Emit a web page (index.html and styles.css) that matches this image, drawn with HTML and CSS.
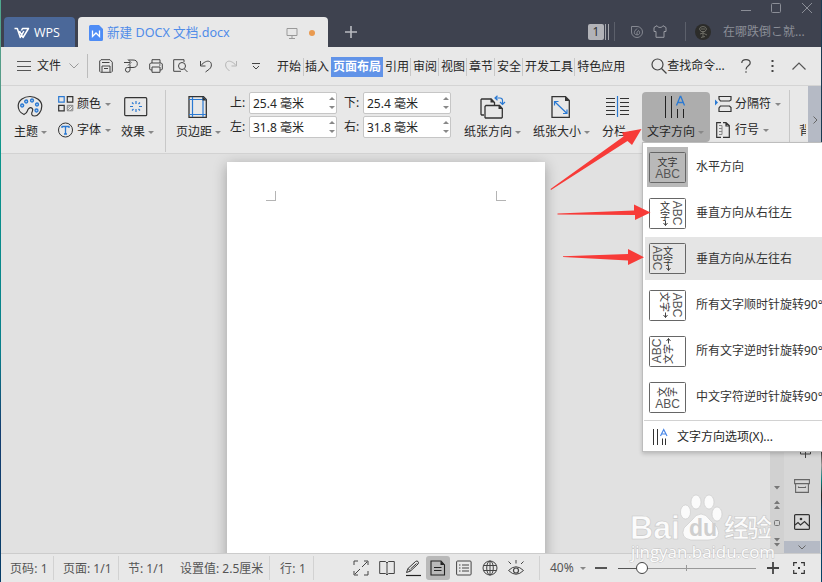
FILE: index.html
```html
<!DOCTYPE html>
<html lang="zh-CN">
<head>
<meta charset="utf-8">
<title>新建 DOCX 文档.docx</title>
<link rel="stylesheet" href="styles.css">
</head>
<body>
<div class="app">
  <header class="titlebar">
    <div class="tab-wps">
      <svg width="17" height="12" viewBox="0 0 17 12"><path d="M.5 1.500h2.800l3 9 3.500-6.500M5.500 4l3.500 6.500 5.500-9H8.500l-1 2" stroke="#fff" stroke-width="1.500" stroke-linejoin="round"/></svg>
      <span>WPS</span>
    </div>
    <div class="tab-doc">
      <svg width="14" height="16" viewBox="0 0 14 16"><path d="M1.500 0H10l4 4v10.500a1.500 1.500 0 0 1-1.500 1.500h-11A1.500 1.500 0 0 1 0 14.500v-13A1.500 1.500 0 0 1 1.500 0Z" fill="#4e8cf5"/><path d="M3.500 5.500v6L7 8l3.500 3.500v-6" stroke="#fff" stroke-width="1.300"/></svg>
      <span class="doc-name">新建 DOCX 文档.docx</span>
      <svg class="monitor" width="12" height="12" viewBox="0 0 12 12"><path d="M1 1.500h10v7H1zM6 8.500v3M3 11.500h6" stroke="#999"/></svg>
      <i class="dot"></i>
    </div>
    <svg class="plus" width="12" height="12" viewBox="0 0 12 12"><path d="M6 0v12M0 6h12" stroke="#b9bbc1" stroke-width="1.600"/></svg>
    <div class="title-right">
      <div class="window-buttons">
        <svg class="minimize" width="10" height="11" viewBox="0 0 10 11"><path d="M0 7.500h10" stroke="#8b8e97"/></svg>
        <svg width="10" height="11" viewBox="0 0 10 11"><rect x=".5" y=".5" width="9" height="9" rx="1" stroke="#8b8e97"/></svg>
        <svg width="10" height="11" viewBox="0 0 10 11"><path d="m0 0 10 10M10 0 0 10" stroke="#8b8e97"/></svg>
      </div>
      <div class="account">
        <span class="badge">1</span><span class="bars"></span><i class="tsep"></i>
        <svg class="flame" width="12" height="12" viewBox="0 0 12 12"><path d="M.5.500H6A5.500 5.500 0 1 1 .500 6Z" stroke="#858891"/><path d="M6 2.500C3.500 5 3 6 3.500 7.500s4.500 2 5 0S8 5 7.500 4.500L6 6.500V9" stroke="#858891"/></svg>
        <svg class="shirt" width="14" height="13" viewBox="0 0 14 13"><path d="M4 .7 1 2.500v4h2v5.800h8V6.500h2v-4L10 .7C9 3 5 3 4 .7Z" stroke="#999ba3" stroke-linejoin="round"/></svg>
        <i class="tsep second"></i>
        <svg class="avatar" width="16" height="16" viewBox="0 0 16 16"><circle cx="8" cy="8" r="8" fill="#2c2c2a"/><path d="M4.500 5Q5 2.500 8 2.500T11.500 5L10 7.500H6ZM6 5h4M8 8v5M5 10l3-1 4 2M6 13.500l4-1" stroke="#74746c" stroke-width=".9"/></svg>
        <span>在哪跌倒こ就...</span>
      </div>
    </div>
  </header>

  <nav class="menubar">
    <svg width="15" height="13" viewBox="0 0 15 13"><path d="M0 1.500h14M0 6.500h14M0 10.500h14" stroke="#555"/></svg>
    <span class="file">文件</span>
    <svg width="10" height="6" viewBox="0 0 10 6"><path d="m.5.500 4.500 4.500L9.500.500" stroke="#999"/></svg>
    <i class="msep"></i>
    <div class="quick">
      <svg width="14" height="14" viewBox="0 0 14 14"><path d="M2 .7h9l2.300 2.500v9.100l-1 1H1.700l-1-1V2ZM3 3.500h7.500M3 13V7h8v6M5 9.500h4" stroke="#444"/></svg>
      <svg width="14" height="14" viewBox="0 0 14 14"><path d="M0 3.500h6M4 .5 7 3.500l-3 3M4.500 1H9q4.300 0 4.300 3.700T9 8.500H3.500A2.300 2.300 0 1 0 6 11V5.500" stroke="#444"/></svg>
      <svg width="14" height="14" viewBox="0 0 14 14"><path d="M3 4V.7h8V4M3 11H1.500L.7 10V5l1-1h10.600l1 1v5l-.8 1H11M3 8h8v5.300H3ZM10 6h1.500" stroke="#444"/></svg>
      <svg width="15" height="14" viewBox="0 0 15 14"><path d="M11 3V.7H.7v11.600H8M11.500 10l3 3" stroke="#444"/><circle cx="9" cy="7" r="3.500" stroke="#444"/></svg>
      <svg width="14" height="14" viewBox="0 0 14 14"><path d="M1.500 2v5h5M1.800 6.500C5 3 8 1.500 10.500 2.500S13 8 10.500 10L6.500 13" stroke="#444"/></svg>
      <svg width="14" height="14" viewBox="0 0 14 14"><path d="M12.500 2v5h-5M12.200 6.500C9 3 6 1.500 3.500 2.500S1 8 3.500 10L5.500 12" stroke="#b5b5b5"/></svg>
      <svg width="8" height="8" viewBox="0 0 8 8"><path d="M0 1.500h8M1 4l3 3 3-3" stroke="#444"/></svg>
    </div>
    <div class="tabs"><span>开始</span><span>插入</span><b>页面布局</b><span>引用</span><span>审阅</span><span>视图</span><span>章节</span><span>安全</span><span>开发工具</span><span>特色应用</span></div>
    <svg width="16" height="16" viewBox="0 0 16 16"><circle cx="6.500" cy="6.500" r="5.500" stroke="#444" stroke-width="1.200"/><path d="m10.500 10.500 5 5" stroke="#444" stroke-width="1.300"/></svg>
    <span class="find">查找命令...</span>
    <svg width="10" height="14" viewBox="0 0 10 14"><path d="M.8 4Q.8.700 5 .7T9.200 4C9.200 7 5 6.500 5 10.500M5 12.300v1.500" stroke="#444" stroke-width="1.200"/></svg>
    <svg class="dots" width="3" height="12" viewBox="0 0 3 12"><path d="M1.500 0v2M1.500 5v2M1.500 10v2" stroke="#444" stroke-width="2"/></svg>
    <svg class="collapse" width="14" height="8" viewBox="0 0 14 8"><path d="m.5 7.500 6.500-6.500 6.500 6.500" stroke="#555" stroke-width="1.200"/></svg>
  </nav>

  <section class="ribbon">
    <div class="tool theme">
      <svg width="26" height="24" viewBox="0 0 26 24"><path d="M7 19.500C3 18 1 14 1.200 10.500 1.500 5 7 1.500 13 1.500s11.800 4 11.800 9.500-4 10-7 10-4-2-2.500-4.500-1-5-3.500-3 0 4-4.800 6Z" stroke="#333" stroke-width="1.200"/><g stroke="#2a79d2" stroke-width="1.300" fill="#a9c9ec"><circle cx="5.200" cy="10.500" r="1.500"/><circle cx="9.200" cy="6.500" r="1.500"/><circle cx="15" cy="5.500" r="1.500"/><circle cx="20" cy="9.500" r="1.500"/><circle cx="19.500" cy="15.500" r="1.500"/></g></svg>
      <span class="label">主题<i class="caret"></i></span>
    </div>
    <div class="stack colors">
      <div><svg width="16" height="16" viewBox="0 0 16 16"><path d="M.7.700h5.500v5.500H.7Z" stroke="#2a79d2" stroke-width="1.200"/><path d="M9.300.700h5.500v5.500H9.300ZM.7 9.300h5.500v5.500H.7Z" stroke="#333" stroke-width="1.200"/><path d="M9.300 9.300h5.500v5.500H9.300Zm0 3 3-3m-3 5.500 5.500-5.500m-2.500 5.500 2.500-2.500" stroke="#888"/></svg><span class="label">颜色<i class="caret"></i></span></div>
      <div><svg width="16" height="16" viewBox="0 0 16 16"><circle cx="7.500" cy="8" r="7" stroke="#333"/><path d="M4 6V4.500h7V6M7.500 4.500V12M6 12h3" stroke="#2a79d2" stroke-width="1.300"/></svg><span class="label">字体<i class="caret"></i></span></div>
    </div>
    <div class="tool effect">
      <svg width="24" height="24" viewBox="0 0 24 24"><rect x=".7" y="2.700" width="22" height="18" rx="1" stroke="#333" stroke-width="1.200"/><path d="M12 6v3M12 14v3M6 11.500h3M15 11.500h3M8 7.500l1.500 1.500M14.500 14l1.500 1.500M16 7.500 14.500 9M9.500 14 8 15.500" stroke="#2a79d2" stroke-width="1.200"/></svg>
      <span class="label">效果<i class="caret"></i></span>
    </div>
    <i class="rsep"></i>
    <div class="tool margin">
      <svg width="20" height="24" viewBox="0 0 20 24"><path d="M1 1.700h14.500L18.300 4.500v17.800H1Z" stroke="#333" stroke-width="1.300"/><path d="M4.500 2v20M15 2v20M1 4.500h17M1 19.500h17" stroke="#2a79d2" stroke-width="1.200"/><path d="M14.500 1.500v4h4Z" fill="#333"/></svg>
      <span class="label">页边距<i class="caret"></i></span>
    </div>
    <div class="fields">
      <span>上:</span><div class="input">25.4 毫米<i class="spin"></i></div><span>下:</span><div class="input">25.4 毫米<i class="spin"></i></div>
      <span>左:</span><div class="input">31.8 毫米<i class="spin"></i></div><span>右:</span><div class="input">31.8 毫米<i class="spin"></i></div>
    </div>
    <div class="tool orient">
      <svg width="24" height="25" viewBox="0 0 24 25"><path d="M4 20H1.700l-.700-.700V4.700L1.700 4h9.500l3.300 3.500V10M5 11.500l1-1h13.500L22.300 13.500v8.800l-.700.700H5.500l-.500-.500Z" stroke="#333" stroke-width="1.300"/><path d="M10.500 3.500v4h4ZM18.500 10v4H23Z" fill="#333"/><path d="M15 3h5q2.500 0 2.500 2.500V9M17.500.7 15 3l2.500 2.300M20 7l2.500 2.500L25 7" stroke="#2a79d2" stroke-width="1.200"/></svg>
      <span class="label">纸张方向<i class="caret"></i></span>
    </div>
    <div class="tool size">
      <svg width="20" height="24" viewBox="0 0 20 24"><path d="M1 1.700h13.500L18.300 5.500v16.800H1Z" stroke="#333" stroke-width="1.300"/><path d="M14 1.500V6h4.500Z" fill="#333"/><path d="m3.500 6.500 12.500 12M3.500 10.500v-4h4M16 14.500v4h-4" stroke="#2a79d2" stroke-width="1.200"/></svg>
      <span class="label">纸张大小<i class="caret"></i></span>
    </div>
    <div class="tool columns">
      <svg width="24" height="24" viewBox="0 0 24 24"><path d="M0 3.500h9M0 7.500h9M0 11.500h9M0 15.500h9M0 19.500h9M14 3.500h9M14 7.500h9M14 11.500h9M14 15.500h9M14 19.500h9" stroke="#333"/><path d="M11.500 1v21" stroke="#2a79d2" stroke-width="1.200"/></svg>
      <span class="label">分栏<i class="caret"></i></span>
    </div>
    <div class="tool direction">
      <svg width="22" height="24" viewBox="0 0 22 24"><path d="M1.500 1v22M7.500 1v22M13.500 14v9M19.500 14v9" stroke="#222"/><path d="m12.500 10.500 3.700-9h.6l3.700 9M14 7.500h5" stroke="#2a79d2" stroke-width="1.300"/></svg>
      <span class="label">文字方向<i class="caret"></i></span>
    </div>
    <div class="stack breaks">
      <div><svg width="17" height="16" viewBox="0 0 17 16"><path d="M4 0v3l1.500 2h9L16 4V.500H4.500M4 16v-4l1.500-2h9l1.500 1.500v4H4Z" stroke="#333" stroke-width="1.200"/><path d="M0 3.500v6l3-3Z" fill="#2a79d2"/></svg><span class="label">分隔符<i class="caret"></i></span></div>
      <div><svg width="17" height="16" viewBox="0 0 17 16"><path d="M6 .7H1.700v14.600H6M8 .7h3L14.300 3.500v11.800H8M11 .7V4h3" stroke="#333" stroke-width="1.200"/><path d="M4 3.500h3v9H4M4 6.500h3M4 9.500h3" stroke="#888"/></svg><span class="label">行号<i class="caret"></i></span></div>
    </div>
    <i class="rsep last"></i>
    <span class="cut">背</span>
    <div class="scroll-right"><svg width="5" height="8" viewBox="0 0 5 8"><path d="m.5.500 3.500 3.500L.5 7.500" stroke="#666"/></svg></div>
  </section>

  <main class="workspace">
    <div class="canvas"><div class="page"><i class="crop left"></i><i class="crop right"></i></div></div>
    <div class="scrollbar">
      <svg width="14" height="70" viewBox="0 0 14 70"><path d="M4 4h6L7 7.500ZM4 22l3-3.500 3 3.500ZM4 27l3-3.500 3 3.500ZM4 56h6l-3 3.500ZM4 61h6l-3 3.500Z" fill="#777"/><rect x="4.500" y="38.500" width="5" height="5" rx="1" stroke="#777"/></svg>
    </div>
    <aside class="side">
      <svg width="16" height="8" viewBox="0 0 16 8"><path d="M2.500 0v3h10V0M7.500 0v7" stroke="#444"/></svg>
      <svg class="archive" width="16" height="14" viewBox="0 0 16 14"><path d="M.6.600h14.800v4H.6ZM1.600 4.600v8.800h12.800V4.600M4.500 7.500v1h7v-1" stroke="#666" stroke-width="1.100"/></svg>
      <svg class="image" width="16" height="16" viewBox="0 0 16 16"><rect x=".6" y=".6" width="14.800" height="14.800" rx="1" stroke="#333" stroke-width="1.200"/><path d="m1 11 3-2.500 2.500 2.500 4-3.500L15 12" stroke="#333" stroke-width="1.200"/><circle cx="7" cy="5" r="1.300" fill="#333"/></svg>
      <div class="side-more"><svg width="8" height="5" viewBox="0 0 8 5"><path d="m.5.500 3.500 3.500L7.500.500" stroke="#666"/></svg></div>
    </aside>
  </main>

  <footer class="status">
    <span class="s1">页码: 1</span><span class="s2">页面: 1/1</span><span class="s3">节: 1/1</span><span class="s4">设置值: 2.5厘米</span><span class="s5">行: 1</span>
    <div class="views">
      <div><svg width="16" height="16" viewBox="0 0 16 16"><path d="M1 5V1h4M1 11v4h4M11 15h4v-4M11 1h4v4M9 7l5-5M2 14l5-5" stroke="#444"/></svg></div>
      <div><svg width="16" height="16" viewBox="0 0 16 16"><path d="M8 3 6.500 1.500H.700v12h5.800L8 15l1.500-1.500h5.800v-12H9.500ZM8 3v12" stroke="#444"/></svg></div>
      <div><svg width="16" height="16" viewBox="0 0 16 16"><path d="M1 15.500h15" stroke="#222" stroke-width="1.200"/><path d="m1.500 12.500 1.500-4L10.500 1.500q1.500-1 2.500 0t0 2.500L5.500 11ZM5.500 9l6-5.500M3 8.500 5.500 11" stroke="#333"/></svg></div>
      <div class="on"><svg width="16" height="16" viewBox="0 0 16 16"><path d="M1 1h10l3.500 4v10H1ZM4 7.500h7.500M4 10.500h7.500" stroke="#222" stroke-width="1.100"/><path d="M10.500 1v4h4Z" fill="#222"/></svg></div>
      <div><svg width="16" height="16" viewBox="0 0 16 16"><rect x=".6" y="1" width="14.500" height="14" rx="1" stroke="#444"/><path d="M3 5h1.500M6 5h7M3 8h1.500M6 8h7M3 11h1.500M6 11h7" stroke="#444"/></svg></div>
      <div><svg width="16" height="16" viewBox="0 0 16 16"><circle cx="8" cy="8" r="7" stroke="#444"/><ellipse cx="8" cy="8" rx="3.300" ry="7" stroke="#444"/><path d="M1.500 5.500h13M1.500 10.500h13M8 1v14" stroke="#444"/></svg></div>
      <div><svg width="18" height="16" viewBox="0 0 18 16"><path d="M1.500 10.500Q9 3 16.500 10.500 9 18 1.500 10.500ZM9 0v3.500M1.500 1.500 4 4M16.500 1.500 14 4" stroke="#444"/><circle cx="9" cy="10.500" r="2.500" stroke="#444" stroke-width="1.200"/></svg></div>
    </div>
    <div class="zoom"><span>40%</span><i class="caret"></i></div>
    <svg class="minus" width="12" height="12" viewBox="0 0 12 12"><path d="M0 6h12" stroke="#555" stroke-width="2"/></svg>
    <svg class="slider" width="138" height="14" viewBox="0 0 138 14"><path d="M0 7.500h138M68.500 4v6" stroke="#999"/><path d="M0 7.500h18" stroke="#555"/><circle cx="24" cy="7" r="5.500" fill="#fff" stroke="#444"/></svg>
    <svg class="more" width="12" height="12" viewBox="0 0 12 12"><path d="M0 6h12M6 0v12" stroke="#444" stroke-width="1.800"/></svg>
    <svg class="fit" width="12" height="12" viewBox="0 0 12 12"><path d="M.7 4V.700H4M8 .700h3.300V4M11.300 8v3.300H8M4 11.300H.700V8" stroke="#333" stroke-width="1.200"/><path d="M5 5h2v2H5Z" fill="#333"/></svg>
  </footer>
</div>

<div class="edge-left"></div><div class="edge-right"></div>

<div class="menu">
  <div class="option"><div class="thumb chosen"><svg width="37" height="31" viewBox="0 0 37 31"><rect class="frame" x=".5" y=".5" width="36" height="30" rx="1"/><text class="han" x="18.500" y="13.500">文字</text><text class="abc" x="18.500" y="26">ABC</text></svg></div><span>水平方向</span></div>
  <div class="option"><div class="thumb"><svg width="37" height="31" viewBox="0 0 37 31"><rect class="frame" x=".5" y=".5" width="36" height="30" rx="1"/><text class="han" x="16" y="11.500">文</text><text class="han" x="16" y="21.500">字</text><path class="arrow" d="M16.500 22.500v5M14.500 25l2 2.500 2-2.500"/><text class="abc" transform="translate(23.500 15) rotate(90)">ABC</text></svg></div><span>垂直方向从右往左</span></div>
  <div class="option hover"><div class="thumb"><svg width="37" height="31" viewBox="0 0 37 31"><rect class="frame" x=".5" y=".5" width="36" height="30" rx="1"/><text class="han" x="19" y="11.500">文</text><text class="han" x="19" y="21.500">字</text><path class="arrow" d="M19.500 22.500v5M17.500 25l2 2.500 2-2.500"/><text class="abc" transform="translate(3.500 15) rotate(90)">ABC</text></svg></div><span>垂直方向从左往右</span></div>
  <div class="option"><div class="thumb"><svg width="37" height="31" viewBox="0 0 37 31"><rect class="frame" x=".5" y=".5" width="36" height="30" rx="1"/><text class="han" transform="translate(12 12) rotate(90)">文字</text><path class="arrow" d="M16.500 22.500v5M14.500 25l2 2.500 2-2.500"/><text class="abc" transform="translate(23.500 15) rotate(90)">ABC</text></svg></div><span>所有文字顺时针旋转90°</span></div>
  <div class="option"><div class="thumb"><svg width="37" height="31" viewBox="0 0 37 31"><rect class="frame" x=".5" y=".5" width="36" height="30" rx="1"/><text class="han" transform="translate(23 18) rotate(-90)">文字</text><path class="arrow" d="M19.500 7.500v-5M17.500 5l2-2.500 2 2.500"/><text class="abc" transform="translate(12 15) rotate(-90)">ABC</text></svg></div><span>所有文字逆时针旋转90°</span></div>
  <div class="option"><div class="thumb"><svg width="37" height="31" viewBox="0 0 37 31"><rect class="frame" x=".5" y=".5" width="36" height="30" rx="1"/><text class="han" transform="translate(17 10) rotate(-90)">文</text><text class="han" transform="translate(27 10) rotate(-90)">字</text><text class="abc" x="18.500" y="26">ABC</text></svg></div><span>中文字符逆时针旋转90°</span></div>
  <div class="settings"><svg width="15" height="16" viewBox="0 0 15 16"><path d="M.5 0v16M4.500 0v16M9.500 9.500V16M12.500 9.500V16" stroke="#333"/><path d="m7.500 7 3.200-6.500L14 7M8.500 5h4.500" stroke="#4a88e8" stroke-width="1.200"/></svg><span>文字方向选项(X)...</span></div>
</div>

<svg class="arrows" width="110" height="150" viewBox="0 0 110 150">
  <path fill="#f73b38" d="M10.500 64 83.500 11.500 82 7.500 101.500 4 92 20 87.500 16 11 65ZM17.500 88.500 94 85.500V79.500l16.500 8L95 95v-5l-77.500-.500ZM23 131.300l65-2.300v-5l16 8.200-16 7.800v-4.500L23 132Z"/>
</svg>
<svg class="watermark" width="150" height="72" viewBox="0 0 150 72">
  <g class="mark">
    <text class="brand" x="0" y="49" textLength="50" lengthAdjust="spacingAndGlyphs">Bai</text>
    <ellipse cx="55.500" cy="22" rx="5" ry="7"/><ellipse cx="66" cy="12" rx="5" ry="7"/><ellipse cx="79" cy="12" rx="5" ry="7"/><ellipse cx="87" cy="24" rx="5" ry="7"/>
    <path d="M71 24q5 0 9 6l7 7q6 13-9 13H61q-11-2-7-12l8-8q4-6 9-6Z"/>
    <text class="brand-cn" x="94" y="46.500" textLength="48">经验</text>
  </g>
  <text class="url" x="1" y="68" textLength="144" lengthAdjust="spacingAndGlyphs">jingyan.baidu.com</text>
  <text class="du" x="59" y="46">du</text>
</svg>
</body>
</html>
```
FILE: styles.css
```css
* { box-sizing: border-box; }
body { margin: 0; width: 822px; height: 582px; overflow: hidden; position: relative; background: #e1e1e1; color: #262626; font: 12px/16px "Noto Sans", "Noto Sans CJK SC", sans-serif; }
svg { display: block; flex: none; fill: none; overflow: visible; }
i { font-style: normal; }
span, b { white-space: nowrap; }
.app { display: grid; grid-template-rows: 47px 39px 68px 399px 29px; width: 822px; height: 582px; }
.titlebar { display: flex; align-items: flex-end; background: #3e424f; padding-left: 4px; }
.tab-wps { width: 71px; height: 30px; border-radius: 4px 4px 0 0; background: #4b6899; color: #fff; display: flex; align-items: center; gap: 3px; padding: 1px 0 0 10px; font-size: 12.5px; }
.tab-wps span { font-family: "Open Sans", sans-serif; }
.tab-doc { width: 250px; height: 30px; margin-left: 3px; border-radius: 4px 4px 0 0; background: #e8e8e8; color: #508ce8; display: flex; align-items: center; padding-left: 11px; padding-top: 1px; }
.doc-name { margin-left: 4px; width: 179px; font-size: 12.6px; }
.dot { width: 6px; height: 6px; border-radius: 50%; background: #e99a50; margin-left: 11px; }
.plus { margin: 0 0 9px 17px; }
.title-right { flex: 1; height: 47px; }
.window-buttons { display: flex; justify-content: flex-end; gap: 21px; height: 22px; padding: 3px 10px 0 0; }
.minimize { margin-right: -1px; }
.account { display: flex; align-items: center; height: 19px; margin-left: 231px; color: #8b8e97; }
.badge { width: 16px; height: 16px; background: #b2b3b8; border-radius: 2px; color: #333; text-align: center; }
.bars { width: 4px; height: 16px; border: solid #a5a7ad; border-width: 0 1px; margin-left: 1px; }
.tsep { width: 1px; height: 19px; margin-left: 5px; background: #5c606b; }
.flame { margin-left: 16px; } .shirt { margin-left: 10px; }
.second { margin-left: 18px; } .avatar { margin: 0 12px 0 9px; }
.menubar { display: flex; align-items: center; background: #e8e8e8; border-bottom: 1px solid #d4d4d4; padding-left: 17px; }
.file { margin: 0 8px 0 5px; width: 24px; }
.msep { width: 1px; height: 24px; background: #bcbcbc; margin-left: 8px; }
.quick { display: grid; grid-template-columns: repeat(7, 25px); align-items: center; justify-items: center; margin-left: 5px; }
.tabs { display: flex; align-items: center; margin: 1px 26px 0 7px; }
.tabs span { padding: 0 1px 0 2px; border-right: 1px solid #c8c8c8; line-height: 18px; }
.tabs span:first-child { padding-right: 2px; }
.tabs span:nth-child(2) { padding: 0 1px; border: 0; }
.tabs b { width: 52px; height: 20px; line-height: 19px; text-align: center; background: #6193e8; color: #fff; margin-left: 1px; }
.tabs span:last-child { border: 0; padding-right: 0; }
.find { width: 74px; }
.dots { margin-left: 20px; } .collapse { margin-left: 18px; }
.ribbon { display: flex; align-items: flex-start; background: #e8e8e8; border-bottom: 1px solid #d2d2d2; padding-left: 14px; overflow: hidden; }
.label { display: flex; align-items: center; gap: 3px; }
.caret { width: 0; height: 0; border: solid transparent; border-width: 3px 3px 0; border-top-color: #888; flex: none; }
.tool { display: flex; flex-direction: column; gap: 4px; padding-top: 9px; flex: none; }
.tool .label { height: 18px; }
.theme { width: 44px; } .theme svg { margin-left: 3px; }
.stack { display: grid; grid-template-rows: 26px 26px; padding-top: 5px; flex: none; }
.stack > div { display: flex; align-items: center; gap: 3px; }
.stack .label { gap: 4px; }
.colors { width: 63px; }
.effect { width: 44px; } .effect svg { margin-left: 3px; }
.rsep { width: 1px; height: 62px; background: #c8c8c8; margin-top: 4px; flex: none; }
.margin { width: 54px; margin-left: 10px; } .margin svg { margin-left: 12px; }
.fields { display: grid; grid-template-columns: 19px 95px 19px 88px; grid-template-rows: 22px 22px; row-gap: 2px; padding-top: 6px; flex: none; }
.fields > span { line-height: 21px; }
.input { width: 88px; height: 22px; border: 1px solid #c6c6c6; border-radius: 2px; background: #fff; padding: 0 1px 0 3px; line-height: 21px; display: flex; justify-content: space-between; }
.spin { width: 6px; display: flex; flex-direction: column; justify-content: space-between; padding: 4px 0; flex: none; }
.spin::before, .spin::after { content: ""; width: 0; height: 0; border: solid transparent; border-width: 0 3px 3px; border-bottom-color: #888; }
.spin::after { transform: rotate(180deg); }
.orient { width: 69px; margin-left: 13px; } .orient svg { margin: 0 0 -1px 16px; }
.size { width: 69px; } .size svg { margin-left: 18px; }
.columns { width: 40px; } .columns svg { margin-left: 4px; }
.direction { width: 68px; height: 50px; margin-top: 6px; padding: 3px 0 0 5px; background: #adadad; border-radius: 4px; }
.direction svg { margin-left: 17px; }
.breaks { width: 78px; margin-left: 5px; }
.last { margin-left: -4px; }
.cut { margin: 37px 0 0 9px; width: 7px; overflow: hidden; flex: none; }
.scroll-right { width: 14px; height: 68px; margin-left: 2px; background: #b5bac5; display: grid; place-items: center; flex: none; }
.workspace { display: grid; grid-template-columns: 770px 14px 37px; overflow: hidden; background: #e1e1e1; }
.canvas { padding: 8px 0 0 227px; overflow: hidden; }
.page { width: 318px; height: 410px; background: #fff; box-shadow: 0 3px 13px rgba(0,0,0,.30); display: flex; justify-content: space-between; padding: 29px 39px; }
.crop { width: 10px; height: 10px; border: solid #b4b4b4; border-width: 0 1px 1px 0; }
.crop.right { border-width: 0 0 1px 1px; }
.scrollbar { background: #d1d1d1; padding-top: 328px; }
.side { background: #d7d7d7; padding: 297px 1px 0 0; display: flex; flex-direction: column; align-items: center; }
.side > svg:first-child { margin-left: 7px; }
.archive { margin-top: 20px; } .image { margin-top: 21px; }
.side-more { width: 36px; height: 12px; background: #b5bac5; margin-top: 11px; display: grid; place-items: center; flex: none; }
.status { display: flex; align-items: center; background: #e8e8e8; border-top: 1px solid #ccc; color: #555; padding-left: 10px; }
.status > span { height: 24px; line-height: 26px; border-right: 1px solid #d2d2d2; flex: none; }
.s1 { width: 44px; letter-spacing: .1px; } .s2 { width: 56px; margin-left: 9px; }
.status > .s3 { width: 52px; margin-left: 9px; border: 0; } .s4 { width: 90px; } .s5 { width: 34px; margin-left: 10px; letter-spacing: .2px; }
.views { display: grid; grid-template-columns: repeat(7, 25.8px); margin-left: 35px; border-right: 1px solid #d2d2d2; width: 191px; flex: none; }
.views > div { width: 24px; height: 24px; display: grid; place-items: center; border-radius: 3px; }
.views .on { background: #b9b9b9; }
.zoom { display: flex; align-items: center; gap: 4px; width: 46px; margin-left: 10px; flex: none; }
.zoom span { width: 26px; }
.slider { margin-left: 11px; } .more { margin-left: 11px; } .fit { margin-left: 14px; }
.minus { margin-left: -1px; }
.edge-left { position: absolute; left: 0; top: 0; width: 1px; height: 582px; background: linear-gradient(#4fa88e, #579b87 80px, #09958b 150px, #087f8b 350px, #143d70 430px, #063d68); }
.edge-right { position: absolute; right: 0; top: 0; width: 1px; height: 582px; background: linear-gradient(#193b52, #17384d 450px, #333 451px, #999 465px, #07807e 480px, #222 495px, #064366 510px); }
.menu { position: absolute; left: 642px; top: 142px; width: 180px; height: 310px; background: #fff; border: solid #bdbdbd; border-width: 1px 0 1px 1px; box-shadow: 0 2px 4px rgba(0,0,0,.18); padding: 2px 0 0 2px; overflow: hidden; }
.option { height: 44px; margin-bottom: 2px; display: flex; align-items: center; gap: 8px; padding-left: 2px; color: #333; }
.hover { background: #e5e5e5; height: 43px; margin-bottom: 3px; }
.thumb { width: 41px; height: 40px; display: grid; place-items: center; flex: none; }
.chosen { background: #b9b9b9; }
.frame { stroke: #666; }
.han { font: 10px "Noto Sans CJK SC", sans-serif; fill: #333; text-anchor: middle; }
.abc { font: 12px "Liberation Sans", sans-serif; fill: #555; text-anchor: middle; }
.arrow { stroke: #444; }
.settings { height: 31px; margin: -1px 0 0 -1px; border-top: 1px solid #d2d2d2; display: flex; align-items: center; gap: 9px; padding: 2px 0 0 9px; }
.arrows { position: absolute; left: 540px; top: 125px; }
.watermark { position: absolute; left: 630px; top: 490px; }
.mark { stroke: #c4c4c4; stroke-width: .6; fill: #fff; opacity: .87; }
.brand { font: bold 34px "Liberation Sans", sans-serif; }
.du { font: bold 23px "Liberation Sans", sans-serif; fill: #cfcfcf; }
.brand-cn { font: bold 25px "Noto Sans CJK SC", sans-serif; }
.url { font: 16px "Open Sans", sans-serif; fill: #fff; opacity: .9; stroke: #c4c4c4; stroke-width: 1px; paint-order: stroke; }
```
